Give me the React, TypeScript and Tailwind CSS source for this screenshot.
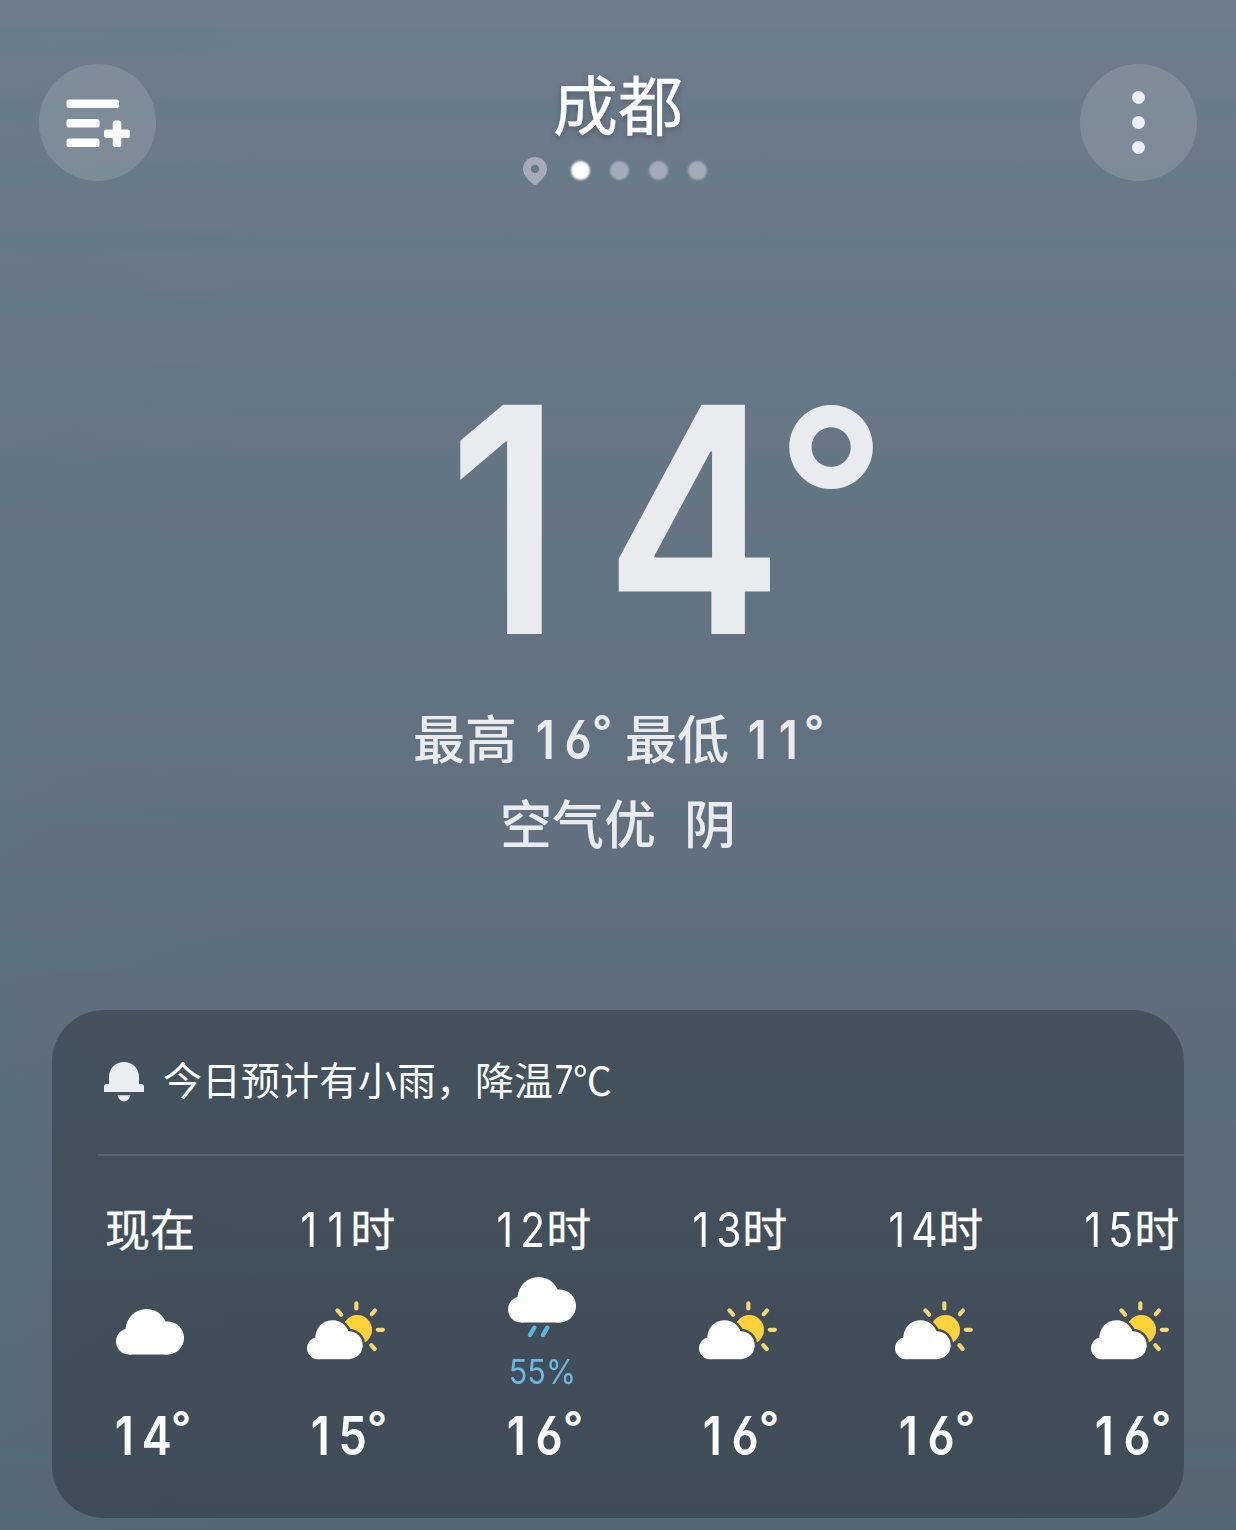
import { useId } from "react";

type Weather = "cloudy" | "partly" | "rain";

interface Hour {
  digits?: string;
  label: string;
  weather: Weather;
  chance?: string;
  temp: string;
}

const hours: Hour[] = [
  { label: "现在", weather: "cloudy", temp: "14" },
  { digits: "11", label: "时", weather: "partly", temp: "15" },
  { digits: "12", label: "时", weather: "rain", chance: "55%", temp: "16" },
  { digits: "13", label: "时", weather: "partly", temp: "16" },
  { digits: "14", label: "时", weather: "partly", temp: "16" },
  { digits: "15", label: "时", weather: "partly", temp: "16" },
];

// Greener stripes of the overcast sky, as [top, bottom]
const bands = [
  [26, 56],
  [97, 122],
  [162, 186],
  [230, 252],
  [295, 315],
  [367, 415],
  [450, 505],
  [535, 640],
  [670, 710],
  [738, 756],
  [808, 820],
  [870, 905],
  [935, 970],
  [1070, 1120],
  [1247, 1280],
  [1448, 1466],
  [1512, 1530],
];

const tint = "rgba(60,130,130,0.08)";
const clear = "rgba(60,130,130,0)";
const sky = `linear-gradient(to bottom, ${bands
  .map(
    ([top, bottom]) =>
      `${clear} ${top - 2}px, ${tint} ${top + 4}px, ${tint} ${bottom - 4}px, ${clear} ${bottom + 2}px`
  )
  .join(", ")})`;

// Tabular digits, narrowed a little
function Digits({ value, cell }: { value: string; cell: string }) {
  return (
    <span className="flex font-[Inter,sans-serif] leading-none [font-feature-settings:'cv03']">
      {value.split("").map((digit, i) => (
        <span
          key={i}
          className={`${cell} flex shrink-0 justify-center ${digit === "1" ? "pr-[0.06em]" : ""}`}
        >
          <span className="scale-x-[0.85]">{digit}</span>
        </span>
      ))}
    </span>
  );
}

function Temp({ value }: { value: string }) {
  return (
    <span className="flex items-start pt-px text-[53px] leading-none font-[560]">
      <Digits value={value} cell="w-[31px]" />
      <span className="-mt-[5px] flex w-[18px] justify-center font-[Inter,sans-serif] text-[44px] leading-none">
        °
      </span>
    </span>
  );
}

function CloudShape() {
  return (
    <>
      <circle cx="13" cy="32.5" r="13" />
      <circle cx="30.5" cy="21" r="21" />
      <circle cx="51.5" cy="29" r="16.5" />
      <rect x="13" y="24" width="38.5" height="21.5" />
    </>
  );
}

function SmallCloudShape() {
  return (
    <>
      <circle cx="11" cy="47.2" r="11" />
      <circle cx="25.5" cy="36.5" r="17.2" />
      <circle cx="41.7" cy="44.2" r="14" />
      <rect x="11" y="40" width="30.7" height="18.2" />
    </>
  );
}

function WeatherIcon({ weather }: { weather: Weather }) {
  const id = useId();

  if (weather === "partly") {
    return (
      <svg width="78" height="59" viewBox="0 0 78 59" className="mt-[23px]">
        <mask id={id} maskUnits="userSpaceOnUse" x="0" y="0" width="78" height="59">
          <rect width="78" height="59" fill="white" />
          <g fill="black" stroke="black" strokeWidth="5">
            <SmallCloudShape />
          </g>
        </mask>
        <circle cx="50.3" cy="28.8" r="14.7" fill="#ffd23c" mask={`url(#${id})`} />
        <g stroke="#f4d672" strokeWidth="4.2" strokeLinecap="round">
          <path d="M49.3 2.4V7.4" />
          <path d="M68 9.5L64.8 13.2" />
          <path d="M70.8 28.8H75.8" />
          <path d="M64.3 44.2L67.7 48" />
          <path d="M30.4 9.4L34.2 13.7" />
        </g>
        <g fill="white">
          <SmallCloudShape />
        </g>
      </svg>
    );
  }

  if (weather === "rain") {
    return (
      <svg width="68" height="61" viewBox="0 0 68 61" className="-mt-px">
        <g fill="white">
          <CloudShape />
        </g>
        <g stroke="#5cb7e2" strokeWidth="4.4" strokeLinecap="round">
          <path d="M26.3 50.7L22 58" />
          <path d="M39.3 50.7L35 58" />
        </g>
      </svg>
    );
  }

  return (
    <svg width="68" height="46" viewBox="0 0 68 46" className="mt-[31px]" fill="white">
      <CloudShape />
    </svg>
  );
}

function HourColumn({ digits, label, weather, chance, temp }: Hour) {
  return (
    <div className="flex flex-col items-center">
      <div className="flex h-[52px] items-center text-[45px] leading-[52px]">
        {digits && (
          <div className="mt-[2px] text-[48px]">
            <Digits value={digits} cell="w-[26.7px]" />
          </div>
        )}
        <span className="-mt-[2px] [-webkit-text-stroke:0.3px_white]">{label}</span>
      </div>
      <div className="mt-[23px] flex h-[131px] flex-col items-center">
        <WeatherIcon weather={weather} />
        {chance && (
          <span className="mt-[17px] scale-x-[0.9] font-[Inter,sans-serif] text-[34px] leading-none text-[#6bb9e0]">
            {chance}
          </span>
        )}
      </div>
      <Temp value={temp} />
    </div>
  );
}

function Header() {
  return (
    <header className="flex h-[185px] items-start justify-between px-[39px] pt-16">
      <button className="flex size-[117px] items-center justify-center rounded-full bg-white/13">
        <svg width="64" height="48" viewBox="0 0 64 48" fill="white" className="ml-px mt-px">
          <rect x="0.5" y="0.5" width="52.5" height="8.6" rx="2.6" />
          <rect x="0.5" y="20" width="33" height="8.6" rx="2.6" />
          <rect x="0.5" y="39.4" width="33" height="8.6" rx="2.6" />
          <rect x="38" y="30.5" width="26" height="8.6" rx="2.6" />
          <rect x="46.7" y="21.6" width="8.6" height="26.4" rx="2.6" />
        </svg>
      </button>
      <div className="flex flex-col items-center">
        <h1 className="-mt-1 text-[65px] leading-[84px] [-webkit-text-stroke:0.3px_white] [text-shadow:0_3px_6px_rgba(40,50,60,0.4)]">
          成都
        </h1>
        <div className="mt-[13px] flex items-center">
          <svg width="24" height="29" viewBox="0 0 24 29" fill="#a6abb9" className="mr-6">
            <path
              fillRule="evenodd"
              d="M12 0C5.2 0 0 5.2 0 11.8C0 18 5 22.6 10 27.2Q12 28.8 14 27.2C19 22.6 24 18 24 11.8C24 5.2 18.8 0 12 0ZM12 7.7A4.2 4.2 0 1 1 12 16.1A4.2 4.2 0 1 1 12 7.7Z"
            />
          </svg>
          <div className="-mt-[2px] flex gap-5 pr-[7px]">
            <span className="size-[19px] rounded-full bg-white blur-[1px]" />
            <span className="size-[19px] rounded-full bg-[#a6abb9] blur-[1px]" />
            <span className="size-[19px] rounded-full bg-[#a6abb9] blur-[1px]" />
            <span className="size-[19px] rounded-full bg-[#a6abb9] blur-[1px]" />
          </div>
        </div>
      </div>
      <button className="flex size-[117px] flex-col items-center justify-center gap-[12.5px] rounded-full bg-white/13">
        <span className="size-[12.7px] rounded-full bg-[#eef0f3]" />
        <span className="size-[12.7px] rounded-full bg-[#eef0f3]" />
        <span className="size-[12.7px] rounded-full bg-[#eef0f3]" />
      </button>
    </header>
  );
}

function Current() {
  return (
    <section className="flex flex-col items-center text-[#e9ebee]">
      <div className="ml-[68px] flex h-[315px] items-start text-[315px] leading-none font-[560]">
        <Digits value="14" cell="w-[179px]" />
        <span className="mt-[12px] flex w-[96px] justify-center font-[Inter,sans-serif] text-[245px] font-semibold leading-none">
          °
        </span>
      </div>
      <div className="mt-[20px] flex h-[85px] items-center text-[52px] font-medium leading-[85px]">
        <span className="-mt-1.5">最高</span>
        <div className="mx-[14px]">
          <Temp value="16" />
        </div>
        <span className="-mt-1.5">最低</span>
        <div className="ml-[14px]">
          <Temp value="11" />
        </div>
      </div>
      <div className="flex h-[85px] items-center gap-7 text-[52px] font-medium leading-[85px]">
        <span className="-mt-1.5">空气优</span>
        <span className="-mt-1.5">阴</span>
      </div>
    </section>
  );
}

function HourlyCard() {
  return (
    <section className="mx-[52px] h-[508px] overflow-hidden rounded-[52px] bg-[rgba(0,8,12,0.27)]">
      <div className="ml-[46px] flex h-[146px] items-center border-b-2 border-white/12 pl-[6px]">
        <svg width="40" height="40" viewBox="0 0 40 40" fill="#ebedf0">
          <path d="M5 22V15C5 6.5 11.5 0 20 0S35 6.5 35 15V22H37.5Q40 22 40 25V30H0V25Q0 22 2.5 22Z" />
          <path d="M13.5 33.3H26.5C25.5 37 23 39.5 20 39.5S14.5 37 13.5 33.3Z" />
        </svg>
        <p className="-mt-[8px] ml-[19px] flex items-center text-[39px] leading-[60px]">
          今日预计有小雨，降温
          <span className="mt-[2px] w-[20px]">
            <Digits value="7" cell="w-[22px]" />
          </span>
          ℃
        </p>
      </div>
      <div className="grid w-[1176px] grid-cols-6 pt-[47px]">
        {hours.map((hour, i) => (
          <HourColumn key={i} {...hour} />
        ))}
      </div>
    </section>
  );
}

export default function App() {
  return (
    <div className="h-[1530px] w-[1236px] overflow-hidden bg-linear-to-b from-[#6f7c8c] to-[#576573] font-['Noto_Sans_CJK_SC',sans-serif] text-white">
      <div className="h-full" style={{ backgroundImage: sky }}>
        <div className="flex h-full flex-col bg-linear-to-r from-[rgba(80,130,150,0.08)] to-transparent to-20%">
          <Header />
          <div className="mt-[177px]">
            <Current />
          </div>
          <div className="mt-[143px]">
            <HourlyCard />
          </div>
        </div>
      </div>
    </div>
  );
}
